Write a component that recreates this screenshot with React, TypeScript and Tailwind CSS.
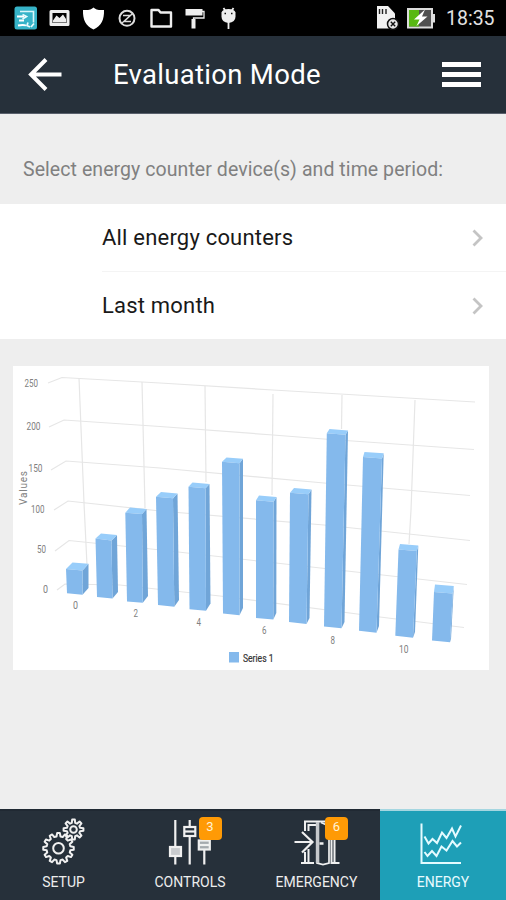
import type { ReactNode } from 'react'

// each bar: [front TL, front TR, back TR, back TL, front BL, front BR, back BR]
const bars = [
  [66, 569, 82.5, 570.5, 88.5, 563.8, 72.5, 562.5, 67, 593.3, 82.5, 594.7, 88.5, 588],
  [95.5, 538.5, 111.5, 540.5, 117, 535, 101, 533.5, 97, 597, 112.5, 598.5, 118, 592],
  [125.3, 512.7, 142, 514, 146.5, 509, 130, 507.5, 127, 601.5, 142.8, 602.7, 148, 596],
  [156, 496.8, 173, 498.3, 177.5, 493.5, 161, 492, 158, 605, 174.3, 606.7, 179, 600],
  [188.5, 486.8, 205.5, 488.3, 209.5, 484, 192.5, 482.5, 189.5, 609.3, 206, 610.7, 210.5, 603.5],
  [222, 461.8, 239.5, 463.2, 243, 458.7, 226.5, 457.5, 223, 613.5, 239.5, 615.3, 243, 608],
  [256, 500.3, 273.5, 501.8, 276.5, 497, 259, 495.5, 256, 618, 273.3, 619.5, 276.3, 613],
  [290, 492.7, 308.5, 494.2, 311.5, 489.5, 294, 488, 289, 622, 306.5, 624, 309.5, 618],
  [326.8, 433.2, 345.5, 434.7, 348, 430.5, 329.5, 429, 324, 626.5, 341.5, 628.3, 344.5, 622],
  [363, 457, 382, 458.5, 383.7, 453.3, 364.5, 452, 359, 630.7, 376.5, 632.7, 379, 626],
  [398.5, 549.5, 416.8, 551, 418.3, 545.5, 400, 544, 395.3, 635.7, 413, 637.7, 415, 632],
  [434, 592, 452.7, 593.5, 453.8, 586, 435, 584.5, 432, 640.5, 450, 642.3, 451, 639],
]

const gridLines = [
  '48,383 62,377.5 160,383 273,390 475,402',
  '49,427 64,420 160,426.5 273,435 324,439 474,449.5',
  '51,470 66,461 160,468 324,483 470,495.5',
  '54,510 68,501 160,511 324,525 470,540.5',
  '55,551 69,540.5 156,549.5 276,563 467,584.5',
  '57,590 65,584 120,585 156,589 220,596 380,617 464,627.5',
  '79,378 84,503 87,565',
  '142,382 145,508',
  '205,386 206,482',
  '273,394 272,495',
  '342,395 341.5,429',
  '415,400 411,510 409,544',
]

const labels = [
  { text: '250', x: 24.5, y: 386.5, w: 13.5 },
  { text: '200', x: 26.5, y: 429.5, w: 14 },
  { text: '150', x: 28.5, y: 472, w: 14 },
  { text: '100', x: 31, y: 513, w: 13.5 },
  { text: '50', x: 37, y: 553, w: 9 },
  { text: '0', x: 43, y: 593, w: 5 },
  { text: '0', x: 73, y: 608.5, w: 5 },
  { text: '2', x: 133.5, y: 617, w: 4.5 },
  { text: '4', x: 196.5, y: 625.5, w: 4.5 },
  { text: '6', x: 262, y: 633.5, w: 4.5 },
  { text: '8', x: 330.5, y: 643.5, w: 4.5 },
  { text: '10', x: 399, y: 652.5, w: 9.5 },
]

function Chart() {
  return (
    <svg viewBox="13 366 476 304" className="block h-[304px] w-[476px]">
      <g fill="none" stroke="#e6e6e6" strokeWidth="1.2">
        {gridLines.map((points) => (
          <polyline key={points} points={points} />
        ))}
      </g>
      {bars.map((b, i) => (
        <g key={i}>
          <polygon points={`${b[2]},${b[3]} ${b[4]},${b[5]} ${b[12]},${b[13]} ${b[10]},${b[11]}`} fill="#70a5d8" />
          <polygon points={`${b[0]},${b[1]} ${b[2]},${b[3]} ${b[4]},${b[5]} ${b[6]},${b[7]}`} fill="#98cdfa" />
          <polygon points={`${b[0]},${b[1]} ${b[2]},${b[3]} ${b[10]},${b[11]} ${b[8]},${b[9]}`} fill="#84b9ec" />
        </g>
      ))}
      <g className="font-['Roboto',sans-serif]" fontSize="10" fill="#808080">
        {labels.map((l, i) => (
          <text key={i} x={l.x} y={l.y} textLength={l.w} lengthAdjust="spacingAndGlyphs">
            {l.text}
          </text>
        ))}
        <text transform="translate(26.5 505) rotate(-90)" textLength="34">Values</text>
        <rect x="229" y="652" width="10" height="10.5" fill="#84b9ec" />
        <text x="243" y="661.5" textLength="30.5" lengthAdjust="spacingAndGlyphs" fill="#333" stroke="#333" strokeWidth="0.2">
          Series 1
        </text>
      </g>
    </svg>
  )
}

function StatusBar() {
  return (
    <div className="flex h-9 items-center justify-between bg-black">
      <svg width="250" height="36" viewBox="0 0 250 36" fill="none">
        {/* cast */}
        <rect x="14.5" y="6.5" width="22.5" height="23" rx="2.5" fill="#36b3c8" />
        <path d="M20 11.500h13.500v11" stroke="#d9f6fa" strokeWidth="1.600" />
        <path d="M17 16.500h7M19 20.500h5M18 25.500q5-1 8 0" stroke="#fff" strokeWidth="1.800" />
        <path d="m22.500 14.500 4 2-4 2.500M28 22.500l-1 3 3 1.500M31 27l3-3.500" stroke="#e8fbfd" strokeWidth="1.700" />
        {/* image */}
        <path fillRule="evenodd" d="M51 10h17q1.500 0 1.500 1.500v13q0 1.500-1.500 1.500H51q-1.500 0-1.500-1.500v-13q0-1.500 1.500-1.500Zm1.500 3v10h14V13Z" fill="#ededed" />
        <path d="M53 22.500v-2l3.500-5 3 2.500 3.500-3.500 3 4.500v3.500Z" fill="#ededed" />
        {/* shield */}
        <path d="M93.500 7.500q2.500 3 10.500 2.500c.3 9.500-2.500 16-10.500 19.500C85.500 26 82.700 19.500 83 10q8 .5 10.500-2.500Z" fill="#fff" />
        {/* blocked */}
        <circle cx="127" cy="18.300" r="7.500" stroke="#ddd" strokeWidth="2" />
        <path d="M123 15.500h7.500l-6.500 6h7M121.500 23.500l11-10" stroke="#ddd" strokeWidth="1.400" />
        {/* folder */}
        <path d="M151.500 12.500v-2.500h7l2 2.500h10.500v14h-19.500Z" stroke="#eee" strokeWidth="2.400" strokeLinejoin="round" />
        {/* paint roller */}
        <path d="M185.500 9h17v6.500h-17Z" fill="#eee" />
        <path d="M202 11.500h2v6.500h-10.500v3" stroke="#eee" strokeWidth="1.300" />
        <path d="M191.500 19h4v9.500h-4Z" fill="#eee" />
        {/* android */}
        <path d="M221.500 12.500q1-3.500 7-3.500t7 3.500v4q0 5.500-7 6.500-7-1-7-6.500Z" fill="#eee" />
        <path d="m223.500 8 2 3M233.500 8l-2 3M228.500 22v7" stroke="#eee" strokeWidth="1.800" />
        <path d="M224.500 13.500h1.500M231 13.500h1.500" stroke="#111" strokeWidth="1.500" />
      </svg>
      <div className="flex items-center">
        <svg width="68" height="36" viewBox="374 0 68 36" fill="none">
          {/* sd card */}
          <path d="M377 6h11l7 7.500V28.500h-18Z" fill="#f2f2f2" />
          <path d="M379.500 9v5M382.500 9v5M386 9v5" stroke="#222" strokeWidth="1.400" />
          <circle cx="393" cy="24" r="5.500" fill="#e8e8e8" stroke="#111" strokeWidth="1.500" />
          <path d="m390.800 21.800 4.400 4.400m0-4.400-4.400 4.400" stroke="#111" strokeWidth="1.400" />
          {/* battery */}
          <rect x="408" y="9" width="24" height="18.500" fill="#505050" stroke="#dcdcdc" strokeWidth="2" />
          <path d="M409 10h10v16.500h-10Z" fill="#58b812" />
          <path d="M432.500 14h2.500v8.500h-2.500Z" fill="#dcdcdc" />
          <path d="m425 9.500-11 10h5.500l-3 6.500 11-9.500h-5.500Z" fill="#fff" />
        </svg>
        <span className="w-16 pt-0.5 pl-1 text-[19.500px] leading-9 text-[#e2e2e2]">18:35</span>
      </div>
    </div>
  )
}

function Header() {
  return (
    <header className="flex h-[78px] items-center border-b border-[#59606c] bg-[#26303a] pr-[25px] pl-7 text-white">
      <svg width="34" height="34" viewBox="0 0 34 34" fill="none" stroke="currentColor" strokeWidth="4">
        <path d="M33.500 16.500H3M18 1.500l-15 15 15 15" />
      </svg>
      <h1 className="ml-[51px] flex-1 pt-px text-[27.500px] leading-8 tracking-[0.3px] whitespace-nowrap">Evaluation Mode</h1>
      <div className="flex flex-col gap-[5px]">
        <span className="h-[5px] w-[39px] bg-white" />
        <span className="h-[5px] w-[39px] bg-white" />
        <span className="h-[5px] w-[39px] bg-white" />
      </div>
    </header>
  )
}

function Row({ label, divider }: { label: string; divider?: boolean }) {
  return (
    <div className="flex h-[67.500px] pl-[102px]">
      <div className={`flex flex-1 items-center justify-between pr-[22px] ${divider ? 'border-b border-[#f4f4f4]' : ''}`}>
        <span className="text-[22px] tracking-[0.2px] text-[#191919]">{label}</span>
        <svg className="mt-0.5" width="12" height="18" viewBox="0 0 12 18" fill="none" stroke="#c4c4c4" strokeWidth="2.800">
          <path d="m1.500 1.500 7.500 7.500-7.500 7.500" />
        </svg>
      </div>
    </div>
  )
}

function gearPath(cx: number, cy: number, inner: number, outer: number, teeth: number) {
  const pts: string[] = []
  const step = (Math.PI * 2) / teeth
  for (let i = 0; i < teeth; i++) {
    const a = i * step - Math.PI / 2
    const corners = [[-0.32, inner], [-0.17, outer], [0.17, outer], [0.32, inner]]
    corners.forEach(([f, r]) => {
      pts.push(`${(cx + Math.cos(a + f * step) * r).toFixed(2)},${(cy + Math.sin(a + f * step) * r).toFixed(2)}`)
    })
  }
  return `M${pts.join('L')}Z`
}

function SetupIcon() {
  return (
    <svg width="50" height="50" viewBox="38.5 816 50 50" fill="none" stroke="#f0f0f0" strokeWidth="2" strokeLinejoin="round">
      <path d={gearPath(58, 848.3, 12, 15.3, 12)} />
      <circle cx="58" cy="848.300" r="5.300" />
      <path d={gearPath(73, 829.5, 6.8, 10, 8)} />
      <circle cx="73" cy="829.500" r="3.300" />
    </svg>
  )
}

function ControlsIcon() {
  return (
    <svg width="50" height="50" viewBox="165 816 50 50" fill="none" stroke="#f0f0f0" strokeWidth="2.200">
      <path d="M175.300 820v27M175.300 856v8.500M189.700 820v7M189.700 836v28.500M204.300 820v20M204.300 850v14.500" />
      <rect x="170" y="847" width="11" height="9" fill="#c8cbce" />
      <rect x="184.300" y="827" width="11" height="9" />
      <path d="M184 831.500h11" />
      <rect x="198.800" y="840.500" width="11" height="9" fill="#a5aaae" />
      <path d="M199 845h11" />
    </svg>
  )
}

function EmergencyIcon() {
  return (
    <svg width="50" height="50" viewBox="291.5 816 50 50" fill="none" stroke="#f0f0f0" strokeWidth="2">
      <path d="M304.500 831v-9.500h29.500V863M308 831v-6h8M300.500 863h13M304.500 852v11M308 849v14M331 840v23M330 863h9" />
      <path d="M316.500 821.500V863l6 1.500 6-1.500V826l-8-3.500" strokeWidth="1.700" />
      <path d="M315.300 822h3.500v41h-3.500Z" fill="#c6c9cc" stroke="none" />
      <path d="M319 843.500h4" strokeWidth="2.500" />
      <path d="M294 842h18M301.500 832l10.500 10-10.500 10.500" strokeWidth="2.200" />
    </svg>
  )
}

function EnergyIcon() {
  return (
    <svg width="50" height="50" viewBox="418 816 50 50" fill="none" stroke="#e4fbff" strokeWidth="2">
      <path d="M421.500 823.500V863H461" />
      <path d="m424.500 836.500 4 7 4-4.500 4.500 4 5-10.500 4.500 5.500 5.500-9.500 3.500 8 5.500-11" />
      <path d="m424.500 852 3 4 4.500-5 4.500 5 5-9.500 5 4 6-9.500 4.500 5.500 4-4" />
    </svg>
  )
}

function Tab({ label, icon, badge, active }: { label: string; icon: ReactNode; badge?: number; active?: boolean }) {
  return (
    <div
      className={`flex flex-col items-center border-t-2 pt-[5px] ${
        active ? 'border-[#a5d6e0] bg-[#1e9fb7] text-[#e9fbff]' : 'border-[#202933] bg-[#26303a] text-[#ededed]'
      }`}
    >
      <div className="relative">
        {icon}
        {badge && (
          <span className="absolute top-[1px] left-[33.500px] h-[23px] w-[23px] rounded-[4px] bg-[#ff9a05] text-center text-[13px] leading-[20px] text-[#fff3d6]">
            {badge}
          </span>
        )}
      </div>
      <span className="mt-[7px] text-[14px] leading-[18px]">{label}</span>
    </div>
  )
}

export default function App() {
  return (
    <div className="flex h-[900px] w-[506px] flex-col overflow-hidden bg-[#eeeeee] font-['Roboto',sans-serif]">
      <StatusBar />
      <Header />
      <main className="flex-1">
        <p className="h-[90px] pt-[43px] pl-[23px] text-[19.500px] leading-[26px] tracking-[0.070px] whitespace-nowrap text-[#808080]">
          Select energy counter device(s) and time period:
        </p>
        <div className="bg-white">
          <Row label="All energy counters" divider />
          <Row label="Last month" />
        </div>
        <div className="mx-[13px] mt-[27px] w-[476px] bg-white">
          <Chart />
        </div>
      </main>
      <nav className="grid h-[91px] grid-cols-[127px_126px_127px_126px]">
        <Tab label="SETUP" icon={<SetupIcon />} />
        <Tab label="CONTROLS" icon={<ControlsIcon />} badge={3} />
        <Tab label="EMERGENCY" icon={<EmergencyIcon />} badge={6} />
        <Tab label="ENERGY" icon={<EnergyIcon />} active />
      </nav>
    </div>
  )
}
